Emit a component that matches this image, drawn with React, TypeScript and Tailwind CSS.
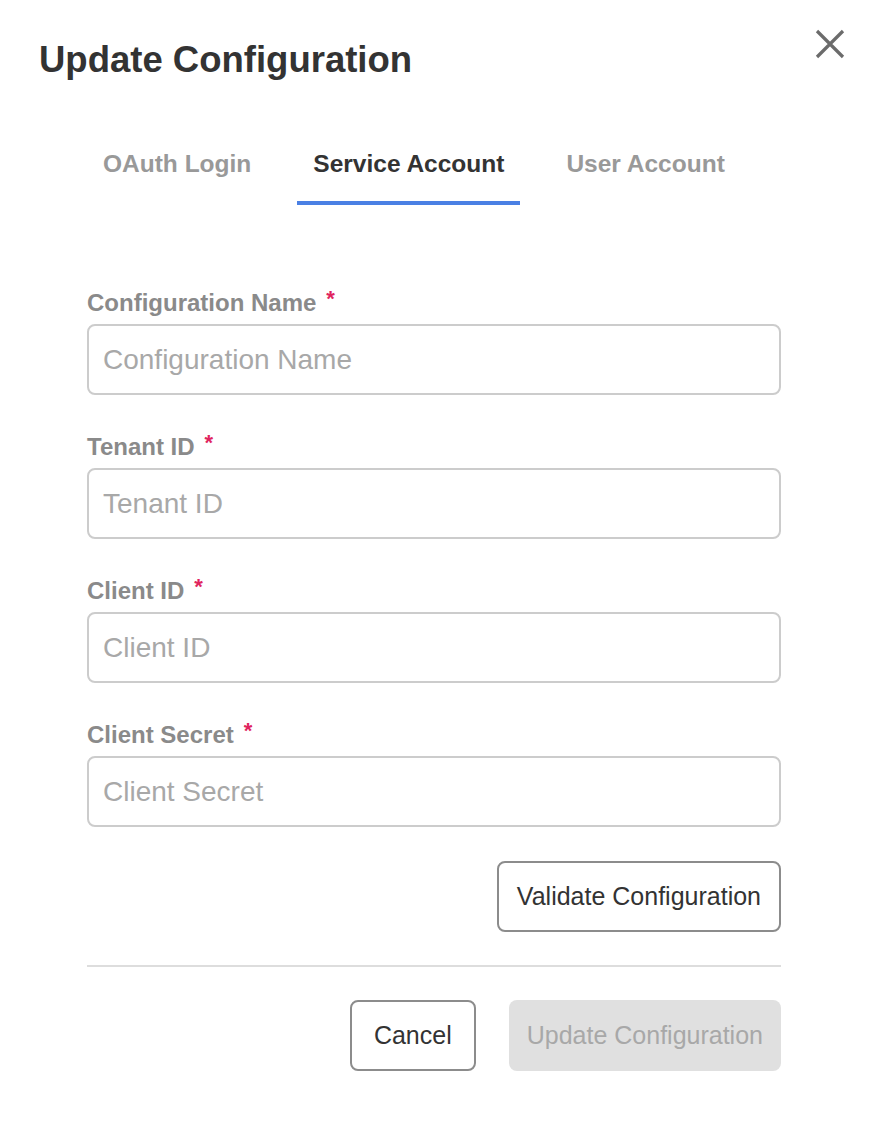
import React, { useState } from 'react';

const fields = ['Configuration Name', 'Tenant ID', 'Client ID', 'Client Secret'];
const tabs = ['OAuth Login', 'Service Account', 'User Account'];

const Field: React.FC<{ label: string }> = ({ label }) => (
  <div className="flex flex-col">
    <label className="flex items-start text-[24px] font-bold leading-[28px] text-[#8a8a8a]">
      {label}
      <span className="ml-[10px] text-[22px] leading-[20px] text-[#e0245e]">*</span>
    </label>
    <input
      placeholder={label}
      className="mt-[7px] h-[71px] w-full rounded-[8px] border-2 border-[#cccccc] px-[14px] text-[28px] text-[#333] outline-none placeholder:text-[#a8a8a8]"
    />
  </div>
);

export default function App() {
  const [active, setActive] = useState(1);

  return (
    <div className="min-h-[1122px] w-[872px] bg-white font-['Liberation_Sans',Arial,sans-serif]">
      {/* header */}
      <div className="flex items-start justify-between pl-[39px] pr-[24px] pt-[38px]">
        <h1 className="text-[36.5px] font-bold leading-[44px] text-[#333333]">Update Configuration</h1>
        <button className="mt-[-12px] text-[#6b6b6b]">
          <svg width="36" height="36" viewBox="0 0 36 36" fill="none" stroke="currentColor" strokeWidth="3.2">
            <path d="M5 5 L31 31 M31 5 L5 31" />
          </svg>
        </button>
      </div>

      <div className="pl-[87px] pr-[91px]">
        {/* tabs */}
        <div className="mt-[68px] flex gap-[30px]">
          {tabs.map((t, i) => (
            <button
              key={t}
              onClick={() => setActive(i)}
              className={`border-b-4 px-[16px] pb-[23px] text-[24.5px] font-bold leading-[28px] ${
                i === active ? 'border-[#4a80e4] text-[#333333]' : 'border-transparent text-[#999999]'
              }`}
            >
              {t}
            </button>
          ))}
        </div>

        {/* form */}
        <div className="mt-[84px] flex flex-col gap-[38px]">
          {fields.map((f) => (
            <Field key={f} label={f} />
          ))}
        </div>

        <div className="mt-[34px] flex justify-end">
          <button className="h-[71px] rounded-[8px] border-2 border-[#8c8c8c] px-[18px] text-[25px] text-[#333333]">
            Validate Configuration
          </button>
        </div>

        <div className="mt-[33px] h-[2px] bg-[#dddddd]" />

        <div className="mt-[33px] flex justify-end gap-[33px]">
          <button className="h-[71px] rounded-[8px] border-2 border-[#8c8c8c] px-[22px] text-[25px] text-[#333333]">
            Cancel
          </button>
          <button disabled className="h-[71px] rounded-[8px] bg-[#e0e0e0] px-[18px] text-[25px] text-[#a8a8a8]">
            Update Configuration
          </button>
        </div>
      </div>
    </div>
  );
}
